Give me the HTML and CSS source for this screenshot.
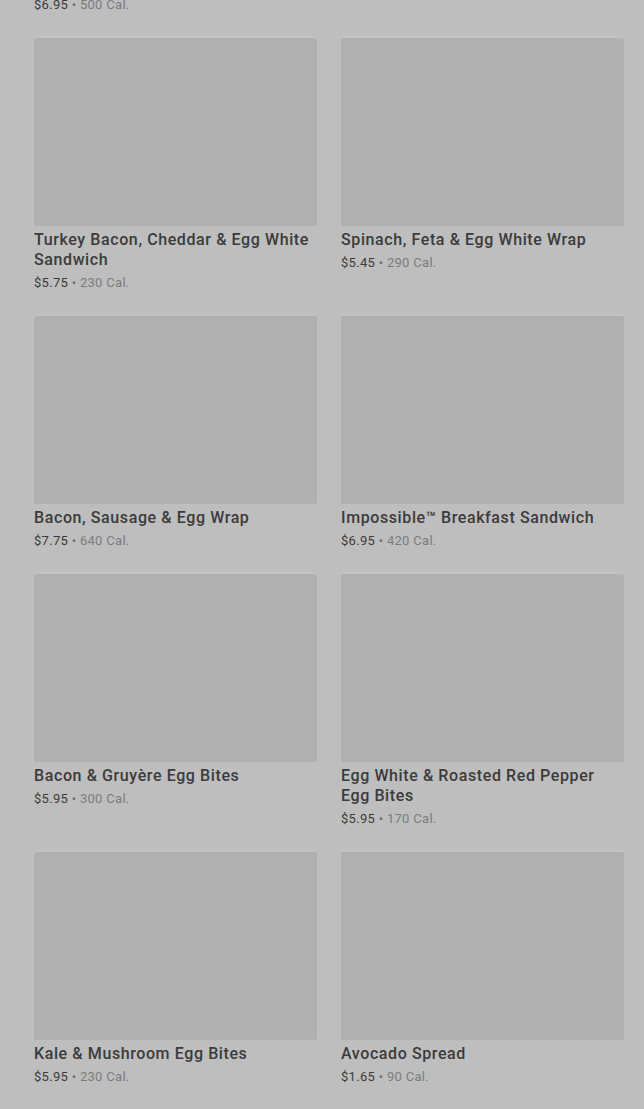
FILE: index.html
```html
<!DOCTYPE html>
<html lang="en">
<head>
    <meta charset="UTF-8">
    <meta name="viewport" content="width=device-width, initial-scale=1.0">
    <title>Breakfast</title>
    <link rel="stylesheet" href="styles.css">
</head>
<body>

<div class="menu-grid">
    <div class="item">
        <div class="item-image"></div>
        <h3 class="item-name">Double-Smoked Bacon, Cheddar &amp; Egg Sandwich</h3>
        <p class="item-meta"><span class="price">$6.95</span> • <span class="cal">500 Cal.</span></p>
    </div>
    <div class="item">
        <div class="item-image"></div>
        <h3 class="item-name">Sausage, Cheddar &amp; Egg Sandwich</h3>
        <p class="item-meta"><span class="price">$5.45</span> • <span class="cal">480 Cal.</span></p>
    </div>

    <div class="item">
        <div class="item-image"></div>
        <h3 class="item-name">Turkey Bacon, Cheddar &amp; Egg White Sandwich</h3>
        <p class="item-meta"><span class="price">$5.75</span> • <span class="cal">230 Cal.</span></p>
    </div>
    <div class="item">
        <div class="item-image"></div>
        <h3 class="item-name">Spinach, Feta &amp; Egg White Wrap</h3>
        <p class="item-meta"><span class="price">$5.45</span> • <span class="cal">290 Cal.</span></p>
    </div>

    <div class="item">
        <div class="item-image"></div>
        <h3 class="item-name">Bacon, Sausage &amp; Egg Wrap</h3>
        <p class="item-meta"><span class="price">$7.75</span> • <span class="cal">640 Cal.</span></p>
    </div>
    <div class="item">
        <div class="item-image"></div>
        <h3 class="item-name">Impossible™ Breakfast Sandwich</h3>
        <p class="item-meta"><span class="price">$6.95</span> • <span class="cal">420 Cal.</span></p>
    </div>

    <div class="item">
        <div class="item-image"></div>
        <h3 class="item-name">Bacon &amp; Gruyère Egg Bites</h3>
        <p class="item-meta"><span class="price">$5.95</span> • <span class="cal">300 Cal.</span></p>
    </div>
    <div class="item">
        <div class="item-image"></div>
        <h3 class="item-name">Egg White &amp; Roasted Red Pepper Egg Bites</h3>
        <p class="item-meta"><span class="price">$5.95</span> • <span class="cal">170 Cal.</span></p>
    </div>

    <div class="item">
        <div class="item-image"></div>
        <h3 class="item-name">Kale &amp; Mushroom Egg Bites</h3>
        <p class="item-meta"><span class="price">$5.95</span> • <span class="cal">230 Cal.</span></p>
    </div>
    <div class="item">
        <div class="item-image"></div>
        <h3 class="item-name">Avocado Spread</h3>
        <p class="item-meta"><span class="price">$1.65</span> • <span class="cal">90 Cal.</span></p>
    </div>
</div>

</body>
</html>
```

FILE: styles.css
```css
html, body {
    margin: 0;
    background-color: #bebebe;
    overflow: hidden;
}
body {
    font-family: Roboto, "Liberation Sans", sans-serif;
}
.menu-grid {
    display: grid;
    grid-template-columns: 283px 283px;
    column-gap: 24px;
    row-gap: 24px;
    padding: 0 20px 0 34px;
    margin-top: -240px;
    align-items: start;
}
.item-image {
    height: 188px;
    background-color: #b0b0b0;
    border-radius: 2px;
    box-shadow: 0 -2px 2px rgba(255, 255, 255, 0.08);
}
.item-name {
    margin: 4px 0 0;
    font-size: 16px;
    line-height: 20px;
    font-weight: 500;
    color: #3b3b3b;
    letter-spacing: 0.6px;
}
.item-meta {
    margin: 4px 0 0;
    font-size: 13px;
    line-height: 18px;
    color: #6f6f6f;
    letter-spacing: 0.3px;
}
.price {
    color: #3b3b3b;
}
.cal {
    color: #7c7c7c;
}
```
